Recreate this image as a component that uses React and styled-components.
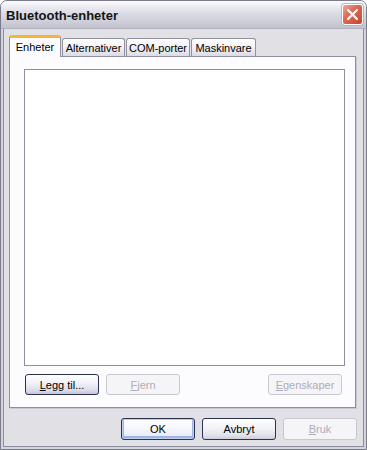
import React from "react";
import styled, { createGlobalStyle, css } from "styled-components";

const Global = createGlobalStyle`
  html, body { margin: 0; padding: 0; background: #ffffff; }
  * { box-sizing: border-box; }
`;

const Window = styled.div`
  width: 367px;
  height: 450px;
  display: flex;
  flex-direction: column;
  border: 1px solid #7b7b8e;
  border-radius: 7px 7px 0 0;
  overflow: hidden;
  background: #d6d6de;
  font-family: "Liberation Sans", Arial, sans-serif;
  font-size: 11px;
  color: #000;
`;

const TitleBar = styled.div`
  height: 28px;
  flex: none;
  display: flex;
  align-items: center;
  justify-content: space-between;
  padding: 0 3px 0 5px;
  background: linear-gradient(
    to bottom,
    #fdfdfe 0%,
    #ececf2 20%,
    #dcdce5 45%,
    #cfcfda 75%,
    #c2c2ce 100%
  );
  border-bottom: 1px solid #b0b0be;
`;

const Title = styled.span`
  font-family: "Liberation Sans", Arial, sans-serif;
  font-weight: bold;
  font-size: 13px;
  color: #141414;
  padding-top: 1px;
`;

const CloseButton = styled.div`
  width: 21px;
  height: 21px;
  border: 1px solid #ffffff;
  border-radius: 3px;
  background: linear-gradient(135deg, #efa89a 0%, #de6a55 40%, #c64630 100%);
  box-shadow: 0 0 0 1px #b5b5c4;
  display: flex;
  align-items: center;
  justify-content: center;
`;

const Frame = styled.div`
  flex: 1;
  display: flex;
  flex-direction: column;
  padding: 0 2px 2px 2px;
  background: #d4d4dc;
`;

const Body = styled.div`
  flex: 1;
  display: flex;
  flex-direction: column;
  background: #e1e0e5;
  border: 1px solid #8d8da0;
  border-top: none;
  padding: 6px 6px 0 5px;
`;

const TabStrip = styled.div`
  display: flex;
  align-items: flex-end;
  height: 21px;
  position: relative;
  z-index: 1;
`;

const Tab = styled.div`
  width: ${(p) => p.$w}px;
  height: ${(p) => (p.$active ? 22 : 18)}px;
  display: flex;
  justify-content: center;
  align-items: ${(p) => (p.$active ? "flex-start" : "center")};
  border: 1px solid #91919f;
  border-bottom: none;
  border-radius: 3px 3px 0 0;
  white-space: nowrap;
  margin-right: 1px;
  padding-top: 1px;
  ${(p) =>
    p.$active
      ? css`
          background: #fcfcfe;
          border-top: 3px solid #f5b43a;
          border-color: #f5b43a #91919f #91919f #91919f;
          margin-bottom: -1px;
          padding-top: 3px;
        `
      : css`
          background: linear-gradient(to bottom, #ffffff 0%, #f4f4f8 40%, #dcdce6 100%);
        `}
`;

const Panel = styled.div`
  height: 352px;
  display: flex;
  flex-direction: column;
  gap: 8px;
  background: #fcfcfe;
  border: 1px solid #8e8e9e;
  box-shadow: 1px 1px 0 #c8c8d2;
  margin-right: 1px;
  padding: 12px 10px 12px 14px;
`;

const ListBox = styled.div`
  flex: 1;
  background: #ffffff;
  border: 1px solid #8e8e9e;
`;

const ButtonRow = styled.div`
  display: flex;
  gap: 7px;
  justify-content: ${(p) => (p.$end ? "flex-end" : "flex-start")};
  padding-right: ${(p) => (p.$end ? 0 : 3)}px;
  ${(p) => p.$end && css`margin-top: 10px;`}
`;

const Spacer = styled.div`
  flex: 1;
`;

const Button = styled.div`
  width: 74px;
  height: ${(p) => (p.$tall ? 22 : 21)}px;
  display: flex;
  align-items: center;
  justify-content: center;
  border-radius: 3px;
  font-size: 11px;
  ${(p) => p.$offset && css`margin-left: 1px;`}
  ${(p) =>
    p.$disabled
      ? css`
          border: 1px solid #c9c8d2;
          background: #f5f4f7;
          color: #aeadb8;
        `
      : css`
          border: 1px solid #2b3050;
          color: #000;
          background: linear-gradient(to bottom, #ffffff 0%, #f3f3f7 45%, #e2e2ea 80%, #cfcfdc 100%);
        `}
  ${(p) =>
    p.$focus &&
    css`
      background: linear-gradient(to bottom, #ffffff 0%, #f0f0f6 45%, #dcdcea 80%, #c4c4dc 100%);
    `}
  ${(p) =>
    p.$default &&
    css`
      box-shadow: inset 0 0 0 1px #bcd0f2, inset 0 -1px 0 2px #9db6e6;
      background: linear-gradient(to bottom, #ffffff 0%, #f4f6fc 50%, #e4e8f4 100%);
    `}
  u { text-decoration: underline; text-underline-offset: 1px; }
`;

export default function App() {
  return (
    <>
      <Global />
      <Window>
        <TitleBar>
          <Title>Bluetooth-enheter</Title>
          <CloseButton>
            <svg width="13" height="13" viewBox="0 0 13 13">
              <path d="M2 2 L11 11 M11 2 L2 11" stroke="#ffffff" strokeWidth="2.2" strokeLinecap="round" />
            </svg>
          </CloseButton>
        </TitleBar>
        <Frame>
          <Body>
            <TabStrip>
              <Tab $active $w={52}>Enheter</Tab>
              <Tab $w={63}>Alternativer</Tab>
              <Tab $w={64}>COM-porter</Tab>
              <Tab $w={65}>Maskinvare</Tab>
            </TabStrip>
            <Panel>
              <ListBox />
              <ButtonRow>
                <Button $focus $offset>
                  <span><u>L</u>egg til...</span>
                </Button>
                <Button $disabled>
                  <span><u>F</u>jern</span>
                </Button>
                <Spacer />
                <Button $disabled>
                  <span><u>E</u>genskaper</span>
                </Button>
              </ButtonRow>
            </Panel>
            <ButtonRow $end>
              <Button $tall $default>OK</Button>
              <Button $tall>Avbryt</Button>
              <Button $tall $disabled>
                <span><u>B</u>ruk</span>
              </Button>
            </ButtonRow>
          </Body>
        </Frame>
      </Window>
    </>
  );
}
